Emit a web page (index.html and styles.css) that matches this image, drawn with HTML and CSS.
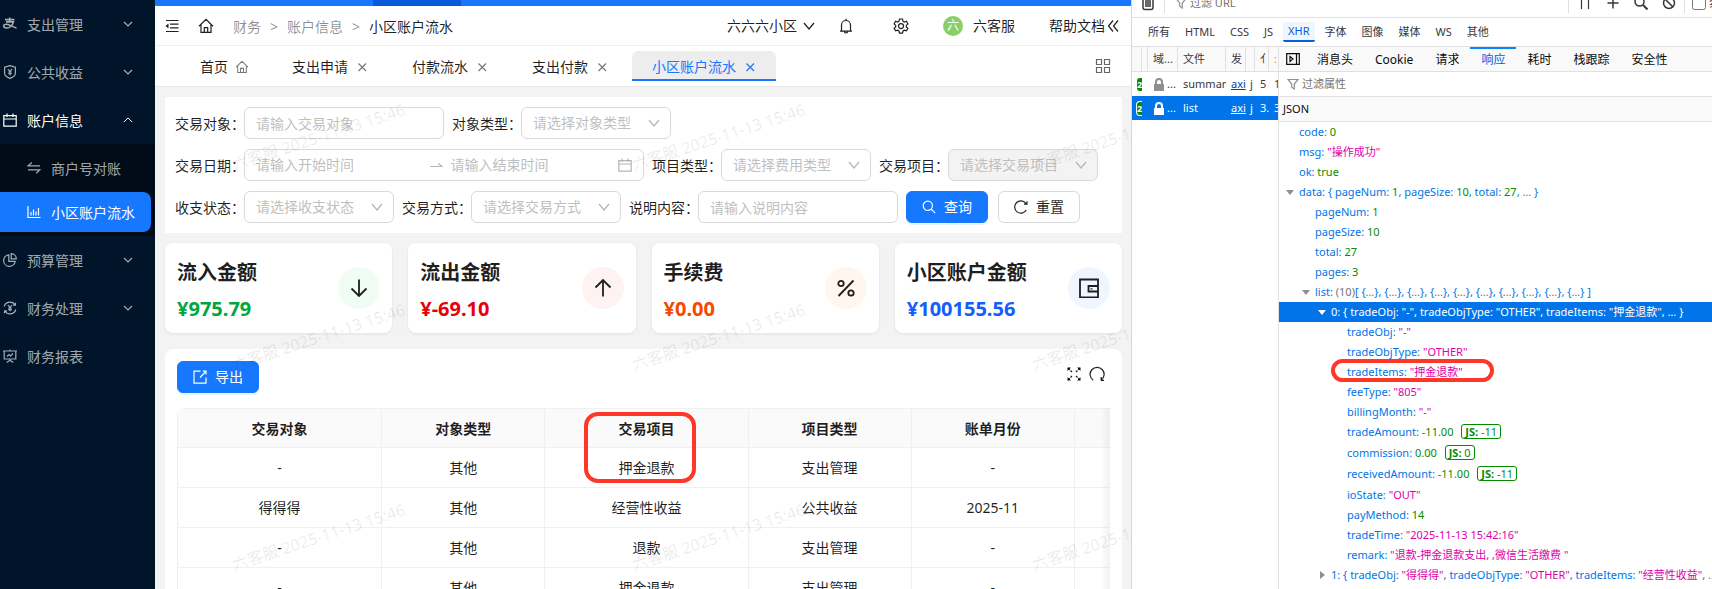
FILE: index.html
```html
<!DOCTYPE html>
<html lang="zh-CN">
<head>
    <meta charset="UTF-8">
    <meta name="viewport" content="width=device-width, initial-scale=1.0">
    <title>小区账户流水</title>
    <link rel="stylesheet" href="styles.css">
</head>
<body>
    <!-- Icônes partagées -->
    <svg class="sprite" aria-hidden="true">
        <symbol id="i-down" viewBox="0 0 12 12"><path d="M1 3l5 6 5-6"/></symbol>
        <symbol id="i-up" viewBox="0 0 12 12"><path d="M1 8.5l5-5 5 5"/></symbol>
        <symbol id="i-arrow" viewBox="0 0 10 10"><path d="M1 3l4 4 4-4"/></symbol>
        <symbol id="i-close" viewBox="0 0 12 12"><path d="M2.5 2.5l7.5 7.5M10 2.5L2.5 10"/></symbol>
        <symbol id="i-home" viewBox="0 0 16 16"><path d="M1 8.2L8 1.4l7 6.8M3 6.8V14.4h10V6.8M6.3 14.4V9.6h3.4v4.8"/></symbol>
        <symbol id="i-calendar" viewBox="0 0 14 14"><path d="M.8 2.6h12.4v10.6H.8zM.8 6h12.4M4 .5v3.6M10 .5v3.6"/></symbol>
        <symbol id="i-funnel" viewBox="0 0 12 12"><path d="M1 1.5h10L7.3 6v5L4.7 9.2V6z"/></symbol>
        <symbol id="i-lock" viewBox="0 0 12 14"><path class="fill" d="M1 6h10v7H1z"/><path d="M3 6V4a3 3 0 0 1 6 0v2" stroke-width="2"/></symbol>
    </svg>

    <div class="layout">
        <nav class="sidebar">
            <a href="#" class="menu-item">
                <svg class="icon" viewBox="0 0 14 14"><path d="M2 2.6h9.5M6.7.4v4.4M3 4.9h7.4C9.6 8.4 6.8 11 3.6 11 1.5 11 .6 10 .7 8.9c.1-1.1 1.3-1.8 3-1.6 2.8.3 5.3 2.3 9.8 3.6" stroke-width="1.6"/></svg>
                <span>支出管理</span>
                <svg class="arrow"><use href="#i-arrow"/></svg>
            </a>
            <a href="#" class="menu-item">
                <svg class="icon" viewBox="0 0 14 14"><path d="M7 .6l5.4 1.6v6.2c0 2-2.4 3.7-5.4 5-3-1.3-5.4-3-5.4-5V2.2zM5 4l2 2.600L9 4M7 6.6v3.6M5.3 7h3.4M5.3 8.6h3.4"/></svg>
                <span>公共收益</span>
                <svg class="arrow"><use href="#i-arrow"/></svg>
            </a>
            <a href="#" class="menu-item open">
                <svg class="icon"><use href="#i-calendar"/></svg>
                <span>账户信息</span>
                <svg class="arrow"><use href="#i-up"/></svg>
            </a>
            <div class="submenu">
                <a href="#" class="menu-item">
                    <svg class="icon" viewBox="0 0 14 14"><path d="M13 4.8H1.2l3.6-3.3M1 8.8h11.8l-3.6 3.5"/></svg>
                    <span>商户号对账</span>
                </a>
                <a href="#" class="menu-item active">
                    <svg class="icon" viewBox="0 0 14 14"><path d="M1 1v11.5h12.5M4 10.5V7M6.5 10.5V4.5M9 10.5V6.5M11.5 10.5V3"/></svg>
                    <span>小区账户流水</span>
                </a>
            </div>
            <a href="#" class="menu-item">
                <svg class="icon" viewBox="0 0 14 14"><path d="M5.8 1.8a5.8 5.8 0 1 0 6.4 6.6H5.8zM8.2.7v5.1h5.1A5.2 5.2 0 0 0 8.2.7z"/></svg>
                <span>预算管理</span>
                <svg class="arrow"><use href="#i-arrow"/></svg>
            </a>
            <a href="#" class="menu-item">
                <svg class="icon" viewBox="0 0 14 14"><path d="M1.2 5.5a6 6 0 0 1 11-1.3M12.8 8.5a6 6 0 0 1-11 1.3M12.6 1.8l-.3 2.6-2.4-.4M1.4 12.2l.3-2.6 2.4.4M5 4l2 2.6L9 4M7 6.6v3.6M5.2 7h3.6M5.2 8.6h3.6"/></svg>
                <span>财务处理</span>
                <svg class="arrow"><use href="#i-arrow"/></svg>
            </a>
            <a href="#" class="menu-item">
                <svg class="icon" viewBox="0 0 14 14"><path d="M0 2h14M1.2 2v8h11.6V2M7 .5V2M7 10v1.5M3.8 13.5l3.2-2.3 3.2 2.3M4 7.5l2-2 1.6 1.5L10 4.5"/></svg>
                <span>财务报表</span>
            </a>
        </nav>

        <main class="main">
            <div class="loading-bar"><i></i></div>
            <header class="header">
                <svg class="icon" viewBox="0 0 14 14"><path d="M1 1.5h12.5M5 5.2h8.5M5 8.8h8.5M1 12.5h12.5"/><path class="fill" d="M3.5 4.500v5L.5 7z"/></svg>
                <svg class="icon home"><use href="#i-home"/></svg>
                <div class="breadcrumb">
                    <a href="#">财务</a><span>&gt;</span><a href="#">账户信息</a><span>&gt;</span><b>小区账户流水</b>
                </div>
                <div class="header-right">
                    <span class="community">六六六小区 <svg class="icon small"><use href="#i-down"/></svg></span>
                    <svg class="icon bell" viewBox="0 0 16 16"><path d="M2 13.2h12M3.5 13V7a4.5 4.5 0 0 1 9 0v6M8 2.5V.8M6.3 13.3a1.7 1.7 0 0 0 3.4 0"/></svg>
                    <svg class="icon gear" viewBox="0 0 16 16"><path d="M6.5 1h3l.5 2.2 1.3.8 2.1-.7 1.5 2.6-1.6 1.5v1.5l1.6 1.4-1.5 2.6-2.1-.7-1.3.8-.5 2.2h-3L6 13l-1.3-.8-2.1.7-1.5-2.6 1.6-1.4V7.4L1.1 5.9l1.5-2.6 2.1.7L6 3.2z"/><circle cx="8" cy="8.1" r="2.5"/></svg>
                    <span class="user"><i class="avatar">六</i>六客服</span>
                    <a href="#" class="help">帮助文档<svg class="icon small" viewBox="0 0 12 12"><path d="M6 .5L1.5 6 6 11.5M11 .5L6.5 6l4.5 5.5"/></svg></a>
                </div>
            </header>

            <div class="tabs">
                <a href="#" class="tab">首页 <svg class="icon small" viewBox="1 1 14 14"><path d="M1 8.200L8 1.400l7 6.800M3 6.800V14.400h10V6.800M6.300 14.400V9.600h3.400v4.800"/></svg></a>
                <a href="#" class="tab">支出申请 <svg class="icon small"><use href="#i-close"/></svg></a>
                <a href="#" class="tab">付款流水 <svg class="icon small"><use href="#i-close"/></svg></a>
                <a href="#" class="tab">支出付款 <svg class="icon small"><use href="#i-close"/></svg></a>
                <a href="#" class="tab active">小区账户流水 <svg class="icon small"><use href="#i-close"/></svg></a>
                <svg class="icon tabs-menu" viewBox="0 0 16 16"><path d="M1.5 1.5h5v5h-5zM9.5 1.5h5v5h-5zM1.5 9.5h5v5h-5zM9.5 9.5h5v5h-5z"/></svg>
            </div>

            <div class="content">
                <form class="filters">
                    <div class="filter-row">
                        <label for="obj">交易对象：</label>
                        <input id="obj" class="field" type="text" placeholder="请输入交易对象">
                        <label for="obj-type">对象类型：</label>
                        <div class="select"><select id="obj-type"><option>请选择对象类型</option></select><svg><use href="#i-down"/></svg></div>
                    </div>
                    <div class="filter-row">
                        <label for="date-start">交易日期：</label>
                        <div class="range">
                            <input id="date-start" type="text" placeholder="请输入开始时间">
                            <svg class="range-arrow" viewBox="0 0 14 14"><path d="M1 8.5h12L9.5 5.5"/></svg>
                            <input type="text" placeholder="请输入结束时间" aria-label="结束时间">
                            <svg class="icon"><use href="#i-calendar"/></svg>
                        </div>
                        <label for="item-type">项目类型：</label>
                        <div class="select"><select id="item-type"><option>请选择费用类型</option></select><svg><use href="#i-down"/></svg></div>
                        <label for="item">交易项目：</label>
                        <div class="select"><select id="item" disabled><option>请选择交易项目</option></select><svg><use href="#i-down"/></svg></div>
                    </div>
                    <div class="filter-row">
                        <label for="io-state">收支状态：</label>
                        <div class="select"><select id="io-state"><option>请选择收支状态</option></select><svg><use href="#i-down"/></svg></div>
                        <label for="pay">交易方式：</label>
                        <div class="select"><select id="pay"><option>请选择交易方式</option></select><svg><use href="#i-down"/></svg></div>
                        <label for="remark">说明内容：</label>
                        <input id="remark" class="field" type="text" placeholder="请输入说明内容">
                        <button type="button" class="btn primary"><svg class="icon" viewBox="0 0 14 14"><circle cx="5.8" cy="5.8" r="4.6"/><path d="M9.2 9.2l4 4"/></svg>查询</button>
                        <button type="reset" class="btn"><svg class="icon" viewBox="0 0 14 14"><path d="M12.3 10A6.2 6.2 0 1 1 12 3.5M13 1.200v3h-3"/></svg>重置</button>
                    </div>
                </form>

                <div class="stats">
                    <div class="stat green">
                        <div class="stat-text"><h3>流入金额</h3><p>¥975.79</p></div>
                        <span class="stat-icon"><svg viewBox="0 0 20 20"><path d="M10 1.5v16M2.5 10.5l7.5 7.5 7.5-7.5"/></svg></span>
                    </div>
                    <div class="stat red">
                        <div class="stat-text"><h3>流出金额</h3><p>¥-69.10</p></div>
                        <span class="stat-icon"><svg viewBox="0 0 20 20"><path d="M10 18.5v-16M2.5 9.5L10 2l7.5 7.5"/></svg></span>
                    </div>
                    <div class="stat orange">
                        <div class="stat-text"><h3>手续费</h3><p>¥0.00</p></div>
                        <span class="stat-icon"><svg viewBox="0 0 20 20"><path d="M17.5 2.5l-15 15.5"/><circle cx="5" cy="5.5" r="2.7"/><circle cx="15" cy="15" r="2.7"/></svg></span>
                    </div>
                    <div class="stat blue">
                        <div class="stat-text"><h3>小区账户金额</h3><p>¥100155.56</p></div>
                        <span class="stat-icon"><svg viewBox="0 0 20 20"><path d="M1 1.5h18v18H1zM19 8H9.500v5.500H19M12.500 10.200v1.200"/></svg></span>
                    </div>
                </div>

                <section class="table-card">
                    <div class="table-toolbar">
                        <button type="button" class="btn primary"><svg class="icon" viewBox="0 0 14 14"><path d="M7.5 1.2H1v12h12V7.5M7 7.5L12.8 1.5M9.8 1.2h3.2v3.2"/></svg>导出</button>
                        <div class="table-tools">
                            <svg class="icon" viewBox="0 0 14 14"><path d="M1 1l4 4M13 1L9 5M1 13l4-4M13 13L9 9" stroke-dasharray="2.5 1"/><path class="fill" d="M.5.5h3.5L.5 4zM13.5.5H10L13.5 4zM.5 13.5V10L4 13.5zM13.5 13.5H10l3.5-3.5z"/></svg>
                            <svg class="icon home" viewBox="0 0 16 16"><path d="M4.2 14.2a7 7 0 1 1 7.8 0M12.2 11v3.4h2.8"/></svg>
                        </div>
                    </div>
                    <div class="table-wrap">
                        <table class="data-table">
                            <colgroup><col class="first"><col><col class="wide"><col><col><col></colgroup>
                            <thead>
                                <tr><th>交易对象</th><th>对象类型</th><th class="marked">交易项目<i class="mark"></i></th><th>项目类型</th><th>账单月份</th><th></th></tr>
                            </thead>
                            <tbody>
                                <tr><td>-</td><td>其他</td><td>押金退款</td><td>支出管理</td><td>-</td><td></td></tr>
                                <tr><td>得得得</td><td>其他</td><td>经营性收益</td><td>公共收益</td><td>2025-11</td><td></td></tr>
                                <tr><td>-</td><td>其他</td><td>退款</td><td>支出管理</td><td>-</td><td></td></tr>
                                <tr><td>-</td><td>其他</td><td>押金退款</td><td>支出管理</td><td>-</td><td></td></tr>
                            </tbody>
                        </table>
                    </div>
                </section>
            </div>

            <div class="watermark" aria-hidden="true">
                <span>六客服 2025-11-13 15:46</span><span>六客服 2025-11-13 15:46</span><span>六客服 2025-11-13 15:46</span>
                <span>六客服 2025-11-13 15:46</span><span>六客服 2025-11-13 15:46</span><span>六客服 2025-11-13 15:46</span>
                <span>六客服 2025-11-13 15:46</span><span>六客服 2025-11-13 15:46</span><span>六客服 2025-11-13 15:46</span>
            </div>
        </main>

        <!-- Panneau réseau -->
        <aside class="devtools">
            <div class="net-toolbar">
                <div class="net-toolbar-inner">
                    <button type="button" class="tool clear" aria-label="清空"><svg viewBox="0 0 14 16"><path d="M2 3v9.5a2 2 0 0 0 2 2h6a2 2 0 0 0 2-2V3zM5 5v7M7 5v7M9 5v7" stroke-width="1.5"/></svg></button>
                    <i class="sep"></i>
                    <svg class="funnel"><use href="#i-funnel"/></svg>
                    <input type="text" class="net-search" placeholder="过滤 URL" aria-label="过滤 URL">
                    <i class="sep"></i>
                    <button type="button" class="tool" aria-label="暂停"><svg viewBox="0 0 14 14"><path d="M3.500 1v12M10.500 1v12"/></svg></button>
                    <button type="button" class="tool" aria-label="新建"><svg viewBox="0 0 14 14"><path d="M7 1.5v11M1.5 7h11" stroke-width="1.5"/></svg></button>
                    <button type="button" class="tool" aria-label="搜索"><svg viewBox="0 0 14 14"><circle cx="5.5" cy="5.5" r="4.5" stroke-width="1.5"/><path d="M9 9l4.5 4.5" stroke-width="2"/></svg></button>
                    <button type="button" class="tool" aria-label="拦截"><svg viewBox="0 0 14 14"><circle cx="7" cy="7" r="5.5" stroke-width="1.5"/><path d="M3 3l8 8" stroke-width="1.5"/></svg></button>
                    <i class="sep"></i>
                    <label class="no-cache"><input type="checkbox">禁用缓存</label>
                </div>
            </div>
            <div class="net-types">
                <button type="button">所有</button><button type="button">HTML</button><button type="button">CSS</button><button type="button">JS</button><button type="button" class="active">XHR</button><button type="button">字体</button><button type="button">图像</button><button type="button">媒体</button><button type="button">WS</button><button type="button">其他</button>
            </div>
            <div class="net-body">
                <div class="requests">
                    <table>
                        <colgroup><col class="c10"><col class="c6"><col class="c30"><col class="c48"><col class="c20"><col class="c9"><col class="c14"><col class="c9"></colgroup>
                        <thead>
                            <tr><th></th><th></th><th>域...</th><th>文件</th><th>发</th><th></th><th>亻</th><th class="warn">:</th></tr>
                        </thead>
                        <tbody>
                            <tr><td><b class="status">2</b></td><td></td><td><svg class="lock"><use href="#i-lock"/></svg>...</td><td>summary</td><td><a href="#">axi</a></td><td>j</td><td>5</td><td>1</td></tr>
                            <tr class="selected"><td><b class="status">2</b></td><td></td><td><svg class="lock"><use href="#i-lock"/></svg>...</td><td>list</td><td><a href="#">axi</a></td><td>j</td><td>3.</td><td>3</td></tr>
                        </tbody>
                    </table>
                </div>
                <div class="details">
                    <div class="detail-tabs">
                        <svg class="toggle" viewBox="0 0 14 12"><path d="M.7.7h12.6v10.6H.7zM10.5.7v10.6M4 3.5l3 2.5-3 2.5z"/></svg>
                        <button type="button">消息头</button><button type="button">Cookie</button><button type="button">请求</button><button type="button" class="active">响应</button><button type="button">耗时</button><button type="button">栈跟踪</button><button type="button">安全性</button>
                    </div>
                    <div class="prop-filter"><svg class="funnel"><use href="#i-funnel"/></svg><input type="text" placeholder="过滤属性" aria-label="过滤属性"></div>
                    <div class="json-title">JSON</div>
                    <div class="tree">
                        <div class="l1"><u>code:</u> <em>0</em></div>
                        <div class="l1"><u>msg:</u> <q>"操作成功"</q></div>
                        <div class="l1"><u>ok:</u> <em>true</em></div>
                        <div class="l1 node"><u>data: { pageNum:</u> <em>1</em><u>, pageSize:</u> <em>10</em><u>, total:</u> <em>27</em><u>, <s>…</s> }</u></div>
                        <div class="l2"><u>pageNum:</u> <em>1</em></div>
                        <div class="l2"><u>pageSize:</u> <em>10</em></div>
                        <div class="l2"><u>total:</u> <em>27</em></div>
                        <div class="l2"><u>pages:</u> <em>3</em></div>
                        <div class="l2 node"><u>list:</u> <s>(10)</s><u>[ {<s>…</s>}, {<s>…</s>}, {<s>…</s>}, {<s>…</s>}, {<s>…</s>}, {<s>…</s>}, {<s>…</s>}, {<s>…</s>}, {<s>…</s>}, {<s>…</s>} ]</u></div>
                        <div class="l3 node selected">0: { tradeObj: "-", tradeObjType: "OTHER", tradeItems: "押金退款", … }</div>
                        <div class="l4"><u>tradeObj:</u> <q>"-"</q></div>
                        <div class="l4"><u>tradeObjType:</u> <q>"OTHER"</q></div>
                        <div class="l4 marked"><u>tradeItems:</u> <q>"押金退款"</q><i class="mark"></i></div>
                        <div class="l4"><u>feeType:</u> <q>"805"</q></div>
                        <div class="l4"><u>billingMonth:</u> <q>"-"</q></div>
                        <div class="l4 number"><u>tradeAmount:</u> <em>-11.00</em> <span class="js"><b>JS:</b> -11</span></div>
                        <div class="l4 number"><u>commission:</u> <em>0.00</em> <span class="js"><b>JS:</b> 0</span></div>
                        <div class="l4 number"><u>receivedAmount:</u> <em>-11.00</em> <span class="js"><b>JS:</b> -11</span></div>
                        <div class="l4"><u>ioState:</u> <q>"OUT"</q></div>
                        <div class="l4"><u>payMethod:</u> <em>14</em></div>
                        <div class="l4"><u>tradeTime:</u> <q>"2025-11-13 15:42:16"</q></div>
                        <div class="l4"><u>remark:</u> <q>"退款-押金退款支出, ,微信生活缴费 "</q></div>
                        <div class="l3 node closed"><u>1: { tradeObj:</u> <q>"得得得"</q><u>, tradeObjType:</u> <q>"OTHER"</q><u>, tradeItems:</u> <q>"经营性收益"</q><u>, <s>…</s> }</u></div>
                    </div>
                </div>
            </div>
        </aside>
    </div>
</body>
</html>
```
FILE: styles.css
```css
* {
    box-sizing: border-box;
}
body {
    margin: 0;
    font-family: "Noto Sans", "Noto Sans CJK SC", sans-serif;
    font-size: 14px;
    line-height: 22px;
    color: rgba(0,0,0,0.88);
    overflow: hidden;
}
a {
    color: inherit;
    text-decoration: none;
}
button, input, select {
    font-family: inherit;
    font-size: inherit;
    line-height: inherit;
    color: inherit;
}
svg {
    fill: none;
    stroke: currentColor;
    stroke-width: 1.2;
    flex: none;
}
svg .fill {
    fill: currentColor;
    stroke: none;
}
.sprite {
    display: none;
}
.icon {
    width: 14px;
    height: 14px;
}
.icon.small {
    width: 12px;
    height: 12px;
}
.icon.home, .icon.bell, .icon.gear, .icon.tabs-menu {
    width: 16px;
    height: 16px;
}
.layout {
    display: flex;
    height: 100vh;
}

/* Menu latéral */
.sidebar {
    flex: none;
    width: 155px;
    background-color: #001529;
    color: rgba(255,255,255,0.65);
    padding-top: 4px;
}
.menu-item {
    display: flex;
    align-items: center;
    height: 40px;
    margin: 0 4px 8px 0;
    padding: 0 18px 0 3px;
}
.menu-item span {
    flex: 1;
    margin-left: 10px;
    padding-top: 2px;
    white-space: nowrap;
}
.menu-item .arrow {
    width: 10px;
    height: 10px;
}
.menu-item.open {
    color: white;
    margin-bottom: 4px;
}
.submenu {
    background-color: #000c17;
    padding: 4px 0;
    margin-bottom: 4px;
}
.submenu .menu-item {
    margin-bottom: 4px;
    padding: 0 0 0 27px;
}
.submenu .menu-item:last-child {
    margin-bottom: 0;
}
.menu-item.active {
    background-color: #1677ff;
    color: white;
    border-radius: 0 8px 8px 0;
}

/* Zone principale */
.main {
    position: relative;
    flex: 1;
    min-width: 0;
    overflow: hidden;
    background-color: #f3f3f3;
}
.loading-bar {
    height: 6px;
    background-color: #1677ff;
    padding-left: 218px;
}
.loading-bar i {
    display: block;
    width: 88px;
    height: 6px;
    background-color: #0958d9;
}
.header {
    display: flex;
    align-items: center;
    height: 40px;
    padding: 0 12px 0 10px;
    background-color: white;
    border-bottom: 1px solid #f0f0f0;
}
.header > .home {
    margin: 0 19px;
}
.breadcrumb {
    display: flex;
    gap: 9px;
    padding-top: 2px;
    color: rgba(0,0,0,0.45);
}
.breadcrumb b {
    font-weight: normal;
    color: rgba(0,0,0,0.88);
}
.header-right {
    display: flex;
    align-items: center;
    margin-left: auto;
}
.community, .user, .help {
    display: flex;
    align-items: center;
    gap: 6px;
}
.header-right .bell {
    margin: 0 39px 0 23px;
}
.user {
    gap: 10px;
    margin: 0 34px;
}
.help {
    gap: 2px;
}
.avatar {
    width: 20px;
    height: 20px;
    line-height: 20px;
    border-radius: 50%;
    background-color: #87d068;
    color: white;
    font-size: 12px;
    font-style: normal;
    text-align: center;
}
.tabs {
    display: flex;
    align-items: center;
    gap: 4px;
    height: 41px;
    padding: 0 20px 0 25px;
    background-color: white;
    border-bottom: 1px solid #e8e8e8;
}
.tab {
    display: flex;
    align-items: center;
    gap: 8px;
    height: 30px;
    padding: 4px 20px 0;
    border-bottom: 2px solid transparent;
    border-radius: 6px 6px 0 0;
}
.tab .icon {
    color: #777;
}
.tab.active {
    background-color: #ededed;
    border-bottom-color: #1677ff;
    border-radius: 6px 6px 0 0;
    color: #1677ff;
}
.tab.active .icon {
    color: #1677ff;
}
.tabs-menu {
    margin-left: auto;
    color: #666;
}
.content {
    padding: 10px 9px 0 10px;
}

/* Filtres */
.filters {
    display: flex;
    flex-direction: column;
    gap: 10px;
    padding: 10px;
    background-color: white;
}
.filter-row {
    display: flex;
    align-items: center;
}
.filter-row label {
    flex: none;
    width: 69px;
    padding-top: 2px;
    white-space: nowrap;
}
.field, .range, .select select {
    height: 32px;
    padding: 0 11px;
    margin: 0;
    background-color: white;
    border: 1px solid #d9d9d9;
    border-radius: 6px;
    outline: none;
}
.field {
    width: 200px;
    margin-right: 8px;
}
input::placeholder {
    color: #bfbfbf;
    opacity: 1;
}
.select {
    position: relative;
    width: 150px;
    margin-right: 8px;
}
.select select {
    appearance: none;
    width: 100%;
    color: #bfbfbf;
    opacity: 1;
}
.select select:disabled {
    background-color: #f3f3f3;
}
.select svg {
    position: absolute;
    right: 11px;
    top: 10px;
    width: 12px;
    height: 12px;
    color: #b5b5b5;
    pointer-events: none;
}
.range {
    display: flex;
    align-items: center;
    width: 400px;
    margin-right: 8px;
    color: #b5b5b5;
}
.range input {
    flex: 1;
    min-width: 0;
    padding: 0;
    border: none;
    outline: none;
    background: none;
}
.range-arrow {
    width: 14px;
    height: 14px;
    margin: 0 8px 0 5px;
}
.btn {
    display: flex;
    align-items: center;
    gap: 8px;
    height: 32px;
    padding: 0 15px;
    background-color: white;
    border: 1px solid #d9d9d9;
    border-radius: 6px;
    cursor: pointer;
}
.btn.primary {
    background-color: #1677ff;
    border-color: #1677ff;
    color: white;
    box-shadow: 0 2px 0 rgba(5,145,255,0.1);
}
.btn + .btn {
    margin-left: 10px;
}

/* Cartes de totaux */
.stats {
    display: grid;
    grid-template-columns: repeat(4, 1fr);
    gap: 16px;
    margin: 10px 0 16px;
}
.stat {
    display: flex;
    align-items: center;
    justify-content: space-between;
    height: 90px;
    padding: 0 12px;
    background-color: white;
    border-radius: 8px;
    box-shadow: 0 1px 3px rgba(0,0,0,0.08);
}
.stat-text {
    padding-top: 5px;
}
.stat h3, .stat p {
    margin: 0;
    font-size: 20px;
    font-weight: bold;
    line-height: 28px;
}
.stat p {
    margin-top: 8px;
}
.stat-icon {
    display: flex;
    align-items: center;
    justify-content: center;
    width: 42px;
    height: 42px;
    border-radius: 50%;
}
.stat-icon svg {
    width: 20px;
    height: 20px;
    stroke-width: 1.8;
}
.green p { color: #00a63e; }
.green .stat-icon { background-color: #f0fdf4; }
.red p { color: #e7000b; }
.red .stat-icon { background-color: #fef2f2; }
.orange p { color: #f54900; }
.orange .stat-icon { background-color: #fff7ed; }
.blue p { color: #155dfc; }
.blue .stat-icon { background-color: #eff6ff; }

/* Tableau */
.table-card {
    padding: 12px;
    background-color: white;
    border-radius: 8px;
}
.table-toolbar {
    display: flex;
    justify-content: space-between;
    margin-bottom: 15px;
}
.table-tools {
    display: flex;
    align-items: center;
    gap: 8px;
    height: 26px;
    margin-right: 5px;
}
.table-wrap {
    position: relative;
    overflow: hidden;
    border-top-left-radius: 8px;
}
.table-wrap::after {
    content: "";
    position: absolute;
    top: 0;
    right: 0;
    width: 10px;
    height: 100%;
    background: linear-gradient(to left, rgba(0,0,0,0.05), rgba(0,0,0,0));
}
.data-table {
    width: 1061px;
    table-layout: fixed;
    border-collapse: separate;
    border-spacing: 0;
    border: 1px solid #f0f0f0;
    border-right: none;
    border-top-left-radius: 8px;
}
.data-table col {
    width: 163px;
}
.data-table .wide {
    width: 203px;
}
.data-table .first {
    width: 204px;
}
.data-table th, .data-table td {
    height: 40px;
    padding: 0;
    text-align: center;
    border-right: 1px solid #f0f0f0;
    border-bottom: 1px solid #f0f0f0;
}
.data-table th {
    height: 39px;
    padding-top: 2px;
    font-weight: 600;
    background-color: #fafafa;
}
.marked {
    position: relative;
}
.mark {
    position: absolute;
    border: 4px solid #ff3729;
}
th .mark {
    left: 39px;
    top: 3px;
    width: 112px;
    height: 71px;
    border-radius: 14px;
}

/* Filigrane */
.watermark {
    position: absolute;
    top: 0;
    left: 0;
    display: grid;
    grid-template-columns: repeat(3, 400px);
    grid-auto-rows: 200px;
    pointer-events: none;
}
.watermark span {
    justify-self: start;
    align-self: start;
    margin: 126px 0 0 73px;
    font-size: 16px;
    white-space: nowrap;
    color: rgba(0,0,0,0.09);
    transform: rotate(-18deg);
}

/* Panneau réseau */
.devtools {
    flex: none;
    display: flex;
    flex-direction: column;
    width: 581px;
    border-left: 1px solid #d7d7db;
    background-color: white;
    font-size: 11px;
    line-height: 20px;
    color: #38383d;
    overflow: hidden;
}
.devtools button {
    padding: 0;
    border: none;
    background: none;
    white-space: nowrap;
}
.net-toolbar {
    display: flex;
    align-items: flex-end;
    flex: none;
    height: 18px;
    overflow: hidden;
    border-bottom: 1px solid #e0e0e2;
}
.net-toolbar-inner {
    flex: none;
    display: flex;
    align-items: center;
    width: 100%;
    height: 28px;
    padding-left: 9px;
    white-space: nowrap;
}
.tool {
    width: 14px;
    height: 16px;
    margin: 0 14px 0 0;
}
.tool svg {
    display: block;
    width: 14px;
    height: 16px;
}
.tool.clear {
    margin-right: 9px;
}
.sep {
    width: 1px;
    height: 20px;
    background-color: #e0e0e2;
}
.funnel {
    width: 12px;
    height: 12px;
    margin: 0 3px 0 10px;
    color: #8f8f9d;
}
.funnel + input {
    flex: 1;
    min-width: 0;
    padding: 0;
    border: none;
    outline: none;
}
.funnel + input::placeholder {
    color: #737373;
}
.net-search + .sep {
    margin-right: 9px;
}
.no-cache {
    display: flex;
    align-items: center;
    width: 20px;
    margin-left: 7px;
    overflow: hidden;
}
.no-cache input {
    flex: none;
    width: 14px;
    height: 14px;
    margin: 0 3px 0 0;
}
.tool:not(.clear) + .sep {
    margin-left: -6px;
}
.net-types {
    flex: none;
    display: flex;
    align-items: center;
    gap: 5px;
    height: 29px;
    padding-left: 11px;
    border-bottom: 1px solid #e0e0e2;
}
.devtools .net-types button {
    height: 20px;
    padding: 0 5px;
}
.devtools .net-types .active {
    background-color: #f0f6fe;
    border-bottom: 2px solid #0060df;
    border-radius: 2px;
    color: #0060df;
    line-height: 18px;
}
.net-body {
    flex: 1;
    display: flex;
    min-height: 0;
}
.requests {
    flex: none;
    width: 146px;
}
.requests table {
    width: 146px;
    table-layout: fixed;
    border-collapse: separate;
    border-spacing: 0;
}
.c6 { width: 6px; }
.c9 { width: 9px; }
.c10 { width: 10px; }
.c14 { width: 14px; }
.c20 { width: 20px; }
.c30 { width: 30px; }
.c48 { width: 48px; }
.requests th, .requests td {
    height: 24px;
    padding: 0 0 0 5px;
    overflow: hidden;
    white-space: nowrap;
    text-align: left;
    font-weight: normal;
}
.requests th {
    height: 25px;
    background-color: #f9f9fa;
    border-right: 1px solid #e0e0e2;
    border-bottom: 1px solid #e0e0e2;
}
.requests th:nth-child(6), .requests td:nth-child(6) {
    padding-left: 4px;
}
.requests th:last-child {
    border-right: none;
}
.requests th:nth-child(-n+2), .requests td:nth-child(2) {
    padding: 0;
}
.requests .warn {
    color: #ff9400;
}
.requests a {
    color: #003eaa;
    text-decoration: underline;
}
.requests .selected {
    background-color: #0074e8;
    color: white;
}
.requests .selected a {
    color: white;
}
.status {
    display: block;
    width: 24px;
    height: 13px;
    line-height: 13px;
    background-color: #058b00;
    border-radius: 3px;
    color: white;
    font-size: 9px;
}
.selected .status {
    box-shadow: 0 0 0 1px white;
}
.lock {
    width: 12px;
    height: 14px;
    margin-right: 2px;
    vertical-align: middle;
    color: #8f8f8f;
}
.selected .lock {
    color: white;
}
.details {
    flex: 1;
    min-width: 0;
    border-left: 1px solid #e0e0e2;
}
.detail-tabs {
    display: flex;
    align-items: center;
    height: 25px;
    padding-left: 7px;
    background-color: #f9f9fa;
    border-bottom: 1px solid #e0e0e2;
    font-size: 12px;
    color: #0c0c0d;
}
.toggle {
    width: 14px;
    height: 12px;
    margin-right: 6px;
}
.devtools .detail-tabs button {
    height: 24px;
    padding: 0 11px;
    border-top: 2px solid transparent;
}
.devtools .detail-tabs .active {
    border-top: 2px solid #0a84ff;
    color: #0060df;
}
.prop-filter {
    display: flex;
    align-items: center;
    height: 25px;
    border-bottom: 1px solid #e0e0e2;
}
.prop-filter .funnel {
    margin-left: 8px;
}
.json-title {
    height: 25px;
    line-height: 24px;
    padding-left: 4px;
    background-color: #f9f9fa;
    border-bottom: 1px solid #e0e0e2;
    color: #0c0c0d;
}
.tree div {
    position: relative;
    height: 20px;
    white-space: nowrap;
    color: #0074e8;
}
.tree .number {
    height: 21px;
}
.tree u, .tree s, .tree em, .tree q {
    text-decoration: none;
    font-style: normal;
    quotes: none;
}
.tree s { color: #737373; }
.tree em { color: #058b00; }
.tree q { color: #dd00a9; }
.tree .l1 { padding-left: 20px; }
.tree .l2 { padding-left: 36px; }
.tree .l3 { padding-left: 52px; }
.tree .l4 { padding-left: 68px; }
.tree .selected {
    background-color: #0074e8;
    color: white;
}
/* Triangle d'ouverture */
.node::before {
    content: "";
    display: inline-block;
    width: 0;
    margin: 0 5px 1px -13px;
    border: 4px solid transparent;
    border-top: 5px solid #8f8f8f;
    border-bottom: none;
}
.node.selected::before {
    border-top-color: white;
}
.node.closed::before {
    margin: 0 6px 0 -11px;
    border: 4px solid transparent;
    border-left: 5px solid #8f8f8f;
    border-right: none;
}
.js {
    display: inline-block;
    height: 15px;
    line-height: 13px;
    margin-left: 5px;
    padding: 0 3px;
    border: 1px solid #058b00;
    border-radius: 3px;
    color: #058b00;
}
.tree .mark {
    left: 52px;
    top: -3px;
    width: 163px;
    height: 23px;
    border-radius: 12px;
}
```
